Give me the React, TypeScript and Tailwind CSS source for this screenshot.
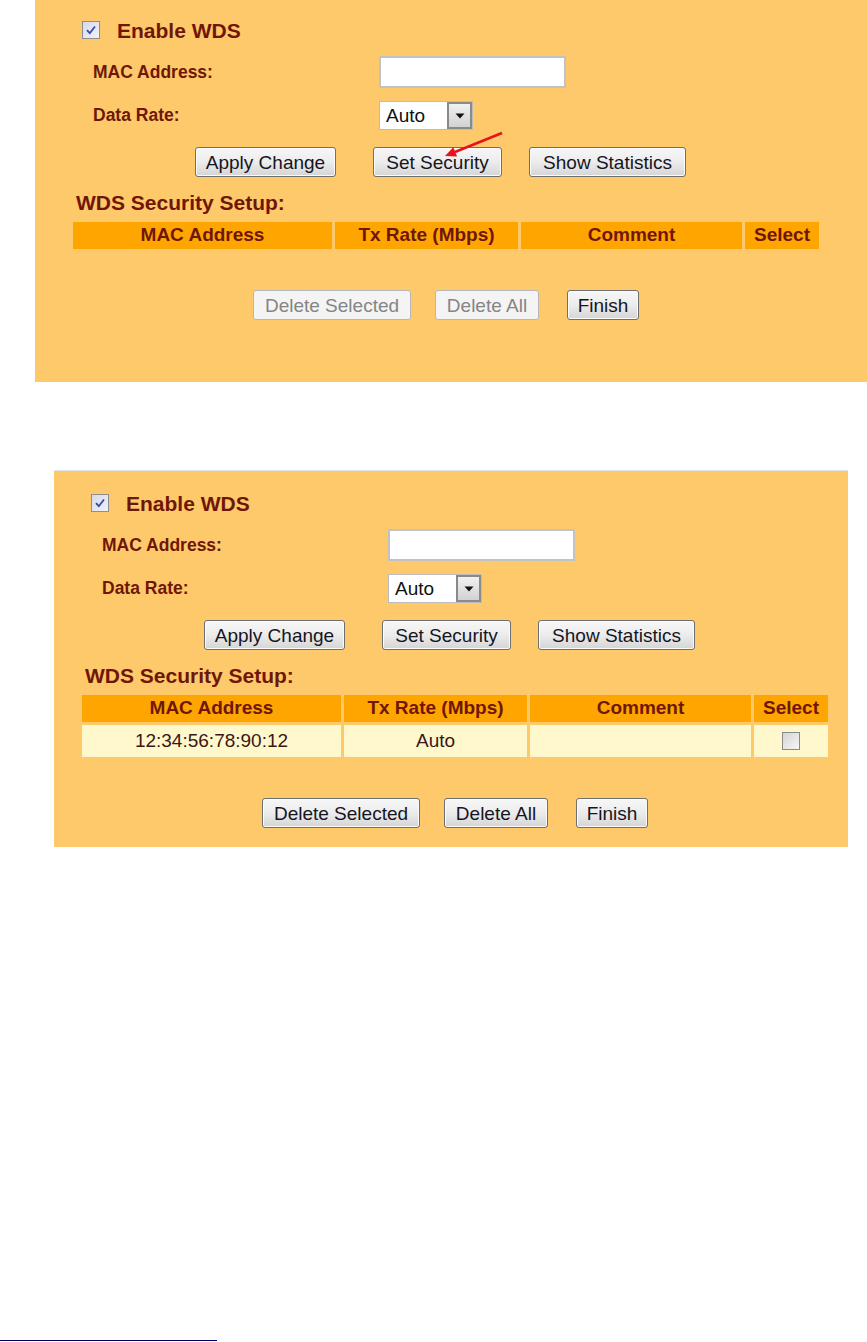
import React from "react";

const maroon = "text-[#701608]";

function Btn({ label, disabled, className = "" }: { label: string; disabled?: boolean; className?: string }) {
  return (
    <div
      className={
        "h-[30px] flex items-center justify-center rounded-[3px] border text-[19px] leading-none shrink-0 " +
        (disabled
          ? "border-[#b4b8bb] bg-[#f4f4f4] text-[#858585] "
          : "border-[#6f6f6f] bg-gradient-to-b from-[#f7f7f7] via-[#ececec] to-[#d5d5d5] text-[#15151f] shadow-[inset_0_0_0_1px_#fbfbfb] ") +
        className
      }
    >
      {label}
    </div>
  );
}

function CheckedBox() {
  return (
    <span className="w-[18px] h-[18px] border border-[#8e8e8e] bg-gradient-to-br from-[#d6d9e8] to-[#f1f2f8] flex items-center justify-center shrink-0">
      <svg width="12" height="12" viewBox="0 0 12 12">
        <path d="M2 6.2 L4.8 9.2 L10 2.5" fill="none" stroke="#3549a8" strokeWidth="1.8" />
      </svg>
    </span>
  );
}

function EmptyBox() {
  return <span className="w-[18px] h-[18px] border border-[#8a8a8a] bg-gradient-to-br from-[#d4d4d4] to-[#f7f7f7]" />;
}

type Row = { mac: string; rate: string; comment: string };

function WdsPanel({ rows, dim, className }: { rows: Row[]; dim: boolean; className: string }) {
  return (
    <div className={"bg-[#fdc96a] " + className}>
      <div className="w-[746px]">
        {/* enable */}
        <div className="flex items-center h-[20px] pl-[9px]">
          <CheckedBox />
          <span className={"ml-[17px] pt-[2px] text-[21px] font-bold leading-[20px] " + maroon}>Enable WDS</span>
        </div>

        <div className="flex items-center mt-[16px] h-[32px]">
          <span className={"w-[306px] pl-[20px] text-[17.5px] font-bold " + maroon}>MAC Address:</span>
          <div className="w-[187px] h-[32px] bg-white border-2 border-[#c2c2c2]" />
        </div>

        <div className="flex items-center mt-[13px] h-[29px]">
          <span className={"w-[306px] pl-[20px] text-[17.5px] font-bold " + maroon}>Data Rate:</span>
          <div className="w-[94px] h-[29px] bg-white border border-[#bcbcbc] flex">
            <span className="flex-1 pl-[6px] text-[19px] leading-[27px] text-[#111]">Auto</span>
            <span className="w-[25px] h-full border-2 border-[#8a8a8a] bg-gradient-to-b from-[#f1f1f1] to-[#d2d2d2] flex items-center justify-center">
              <svg width="10" height="6" viewBox="0 0 10 6">
                <path d="M0.5 0.5 H9.5 L5 5.5 Z" fill="#111" />
              </svg>
            </span>
          </div>
        </div>

        <div className="flex mt-[17px]">
          <Btn label="Apply Change" className="ml-[122px] w-[141px]" />
          <Btn label="Set Security" className="ml-[37px] w-[129px]" />
          <Btn label="Show Statistics" className="ml-[27px] w-[157px]" />
        </div>

        <div className={"mt-[14px] pl-[3px] text-[21px] font-bold leading-[24px] " + maroon}>WDS Security Setup:</div>

        <div className="mt-[7px] grid grid-cols-[259px_183px_221px_74px] gap-[3px]">
          {["MAC Address", "Tx Rate (Mbps)", "Comment", "Select"].map((h) => (
            <div key={h} className={"h-[27px] bg-[#ffa500] flex items-center justify-center text-[19px] font-bold " + maroon}>
              {h}
            </div>
          ))}
          {rows.map((r) => (
            <React.Fragment key={r.mac}>
              <div className="h-[32px] bg-[#fff8cc] flex items-center justify-center text-[19px] text-[#3b1616]">{r.mac}</div>
              <div className="h-[32px] bg-[#fff8cc] flex items-center justify-center text-[19px] text-[#3b1616]">{r.rate}</div>
              <div className="h-[32px] bg-[#fff8cc]">{r.comment}</div>
              <div className="h-[32px] bg-[#fff8cc] flex items-center justify-center">
                <EmptyBox />
              </div>
            </React.Fragment>
          ))}
        </div>

        <div className="flex mt-[41px]">
          <Btn label="Delete Selected" disabled={dim} className="ml-[180px] w-[158px]" />
          <Btn label="Delete All" disabled={dim} className="ml-[24px] w-[104px]" />
          <Btn label="Finish" className="ml-[28px] w-[72px]" />
        </div>
      </div>
    </div>
  );
}

export default function App() {
  return (
    <div className="w-[867px] h-[1342px] bg-white font-['Liberation_Sans',Arial,sans-serif] overflow-hidden">
      <div className="relative">
        <WdsPanel rows={[]} dim className="ml-[35px] w-[832px] h-[382px] pt-[20px] pl-[38px]" />
        {/* red pointer arrow */}
        <svg className="absolute left-[440px] top-[128px] pointer-events-none" width="70" height="35" viewBox="0 0 70 35">
          <line x1="62" y1="5" x2="15" y2="24" stroke="#e8121c" strokeWidth="2.5" />
          <polygon points="5,28 17.1,28.5 13.3,19.3" fill="#e8121c" />
        </svg>
      </div>

      <WdsPanel
        rows={[{ mac: "12:34:56:78:90:12", rate: "Auto", comment: "" }]}
        dim={false}
        className="mt-[88px] ml-[54px] w-[794px] h-[377px] border-t border-[#e2e2e2] pt-[22px] pl-[28px]"
      />

      <div className="mt-[493px] w-[217px] h-[1px] bg-[#000060]" />
    </div>
  );
}
